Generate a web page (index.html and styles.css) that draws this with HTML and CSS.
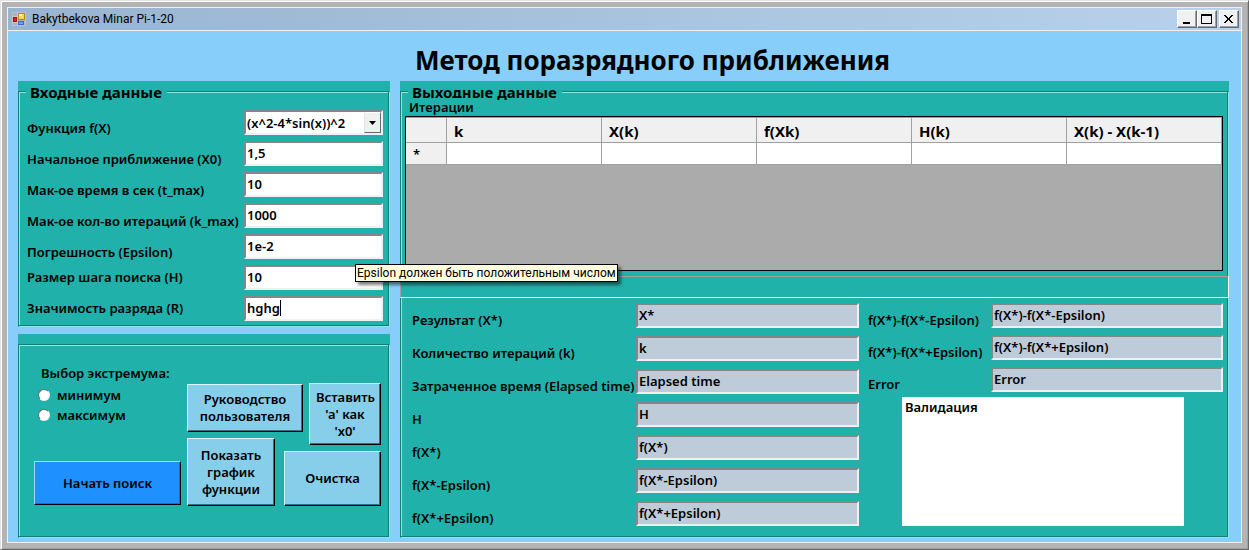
FILE: index.html
```html
<!DOCTYPE html>
<html lang="ru">
<head>
<meta charset="utf-8">
<title>Bakytbekova Minar Pi-1-20</title>
<link rel="stylesheet" href="styles.css">
</head>
<body>
<div class="window">
  <header class="titlebar">
    <svg class="app-icon" width="14" height="14" viewBox="0 0 14 14" aria-hidden="true">
      <rect x="0.5" y="0.5" width="13" height="13" fill="#a9b3bf" stroke="#c0bfbd"/>
      <path d="M5.500 0v14M0 4.500h6M0 10.500h14" stroke="#c9c7c3" fill="none"/>
      <rect x="1.500" y="5.500" width="3" height="4" fill="#d8281c" stroke="#9c1710"/>
      <rect x="6.500" y="1.500" width="6" height="6" fill="#fcd462" stroke="#b98a10"/>
      <rect x="7" y="2" width="3" height="2" fill="#fff0b0"/>
      <rect x="6.500" y="9.500" width="5" height="3" fill="#6f9df2" stroke="#3f67cf"/>
    </svg>
    <span class="caption">Bakytbekova Minar Pi-1-20</span>
    <button class="win-btn" type="button" aria-label="Свернуть"><svg width="12" height="12" viewBox="0 0 12 12"><path d="M2 9h7v2H2z"/></svg></button>
    <button class="win-btn" type="button" aria-label="Развернуть"><svg width="12" height="12" viewBox="0 0 12 12"><path fill-rule="evenodd" d="M0 1h11v10H0zM1 3v7h9V3z"/></svg></button>
    <button class="win-btn win-close" type="button" aria-label="Закрыть"><svg width="12" height="12" viewBox="0 0 12 12"><path d="M1 2h2v1h1v1h1v1h1V4h1V3h1V2h2v1H9v1H8v1H7v2h1v1h1v1h1v1H8V9H7V8H6V7H5v1H4v1H3v1H1V9h1V8h1V7h1V5H3V4H2V3H1z"/></svg></button>
  </header>

  <main class="client">
    <h1 class="heading">Метод поразрядного приближения</h1>
    <div class="columns">
      <div class="side">
        <section class="group">
          <fieldset class="frame inputs">
            <legend class="legend">Входные данные</legend>
            <div class="form">
              <label class="low" for="fn">Функция f(X)</label>
              <div class="combo">
                <select id="fn"><option>(x^2-4*sin(x))^2</option></select>
                <span class="arrow" aria-hidden="true"><svg width="7" height="4" viewBox="0 0 7 4"><path d="M0 0h7L3.500 4z"/></svg></span>
              </div>
              <label class="low" for="x0">Начальное приближение (X0)</label>
              <input class="box" id="x0" type="text" value="1,5">
              <label class="low" for="tmax">Мак-ое время в сек (t_max)</label>
              <input class="box" id="tmax" type="text" value="10">
              <label class="low" for="kmax">Мак-ое кол-во итераций (k_max)</label>
              <input class="box" id="kmax" type="text" value="1000">
              <label class="low" for="eps">Погрешность (Epsilon)</label>
              <input class="box" id="eps" type="text" value="1e-2">
              <label for="step">Размер шага поиска (H)</label>
              <div class="field">
                <input class="box" id="step" type="text" value="10">
                <div class="tooltip" role="tooltip">Epsilon должен быть положительным числом</div>
              </div>
              <label for="rank">Значимость разряда (R)</label>
              <div class="field">
                <input class="box" id="rank" type="text" value="hghg">
                <span class="caret" aria-hidden="true"></span>
              </div>
            </div>
          </fieldset>
        </section>

        <section class="group actions-group">
          <fieldset class="frame actions" aria-label="Действия">
            <div class="choice">
              <div class="radios" role="radiogroup" aria-labelledby="ext">
                <div class="choice-title" id="ext">Выбор экстремума:</div>
                <label class="radio"><input type="radio" name="ext">минимум</label>
                <label class="radio"><input type="radio" name="ext">максимум</label>
              </div>
              <button class="btn start" type="button">Начать поиск</button>
            </div>
            <div class="buttons">
              <button class="btn guide" type="button">Руководство пользователя</button>
              <button class="btn insert" type="button">Вставить 'а' как 'x0'</button>
              <button class="btn chart" type="button">Показать график функции</button>
              <button class="btn clear" type="button">Очистка</button>
            </div>
          </fieldset>
        </section>
      </div>

      <section class="group output">
        <fieldset class="frame">
          <legend class="legend">Выходные данные</legend>
          <div class="iterations">
            <div class="grid-title" id="iter">Итерации</div>
            <div class="datagrid">
              <table aria-labelledby="iter">
                <thead>
                  <tr><th class="rowhead"></th><th>k</th><th>X(k)</th><th>f(Xk)</th><th>H(k)</th><th>X(k) - X(k-1)</th></tr>
                </thead>
                <tbody>
                  <tr><td class="rowhead">*</td><td></td><td></td><td></td><td></td><td></td></tr>
                </tbody>
              </table>
            </div>
          </div>
          <div class="statusbar"></div>
          <div class="results">
            <div class="pairs">
              <label for="r1">Результат (X*)</label><input class="box out" id="r1" type="text" readonly value="X*">
              <label for="r2">Количество итераций (k)</label><input class="box out" id="r2" type="text" readonly value="k">
              <label for="r3">Затраченное время (Elapsed time)</label><input class="box out" id="r3" type="text" readonly value="Elapsed time">
              <label for="r4">H</label><input class="box out" id="r4" type="text" readonly value="H">
              <label for="r5">f(X*)</label><input class="box out" id="r5" type="text" readonly value="f(X*)">
              <label for="r6">f(X*-Epsilon)</label><input class="box out" id="r6" type="text" readonly value="f(X*-Epsilon)">
              <label for="r7">f(X*+Epsilon)</label><input class="box out" id="r7" type="text" readonly value="f(X*+Epsilon)">
            </div>
            <div class="checks">
              <div class="pairs errors">
                <label for="e1">f(X*)-f(X*-Epsilon)</label><input class="box out" id="e1" type="text" readonly value="f(X*)-f(X*-Epsilon)">
                <label for="e2">f(X*)-f(X*+Epsilon)</label><input class="box out" id="e2" type="text" readonly value="f(X*)-f(X*+Epsilon)">
                <label for="e3">Error</label><input class="box out" id="e3" type="text" readonly value="Error">
              </div>
              <textarea class="validation" aria-label="Валидация" readonly>Валидация</textarea>
            </div>
          </div>
        </fieldset>
      </section>
    </div>
  </main>
</div>
</body>
</html>
```
FILE: styles.css
```css
* {
  box-sizing: border-box;
}

body {
  margin: 0;
  font: 600 13px/18px "Noto Sans", "Open Sans", sans-serif;
  color: #000;
}

input, select, textarea, button {
  font: inherit;
  color: inherit;
  margin: 0;
}

.window {
  display: flex;
  flex-direction: column;
  min-height: 100vh;
  padding: 5px;
  background: #b4b4b4;
  border: 1px solid;
  border-color: #e3e3e3 #696969 #696969 #e3e3e3;
  box-shadow: inset 1px 1px #fff, inset -1px -1px #a0a0a0;
}

.titlebar {
  display: flex;
  align-items: center;
  height: 24px;
  margin: 1px 1px 0;
  padding: 0 2px 0 4px;
  border: 1px solid #f0f0f0;
  background: linear-gradient(90deg, #99b4d1, #b9d1ea);
}

.caption {
  flex: 1;
  margin-left: 6px;
  font-family: Roboto, "Noto Sans", sans-serif;
  font-size: 12px;
  font-weight: 400;
}

.win-btn {
  display: flex;
  align-items: center;
  justify-content: center;
  width: 20px;
  height: 18px;
  padding: 0;
  background: #f0f0f0;
  border: 1px solid;
  border-color: #fff #696969 #696969 #fff;
  box-shadow: inset -1px -1px #a0a0a0;
}

.win-close {
  margin-left: 2px;
}

.client {
  flex: 1;
  display: flex;
  flex-direction: column;
  margin: 0 1px 1px;
  padding: 0 12px 4px 10px;
  background: #87cefa;
  border: 1px solid #f0f0f0;
  border-top: 0;
}

.heading {
  margin: 0;
  padding: 11px 0 3px 397px;
  font-size: 26px;
  line-height: 36px;
  font-weight: 700;
}

.columns {
  flex: 1;
  display: grid;
  grid-template-columns: 372fr 829fr;
  column-gap: 10px;
}

.side {
  display: flex;
  flex-direction: column;
  gap: 7px;
}

.group {
  display: flex;
  flex-direction: column;
  background: #20b2aa;
}

.frame {
  flex: 1;
  min-width: 0;
  margin: 0 1px 1px 0;
  padding: 0;
  border: 1px solid #177d78;
  box-shadow: inset 1px 1px #8ee6df, 1px 1px #8ee6df;
}

.legend {
  margin-left: 7px;
  padding: 2px 5px 0 4px;
  background: #20b2aa;
  font-size: 15px;
  line-height: 18px;
  font-weight: 700;
}

.form {
  display: grid;
  grid-template-columns: 1fr 139px;
  row-gap: 6px;
  padding: 9px 5px 4px 8px;
}

.form label {
  line-height: 25px;
  white-space: nowrap;
}

.form .low {
  padding-top: 5px;
  line-height: 20px;
  align-self: end;
  height: 22px;
}

.box {
  display: block;
  width: 100%;
  height: 25px;
  padding: 0 1px 1px;
  background: #fff;
  border: 2px solid;
  border-color: #868686 #f0f0f0 #f0f0f0 #868686;
  outline: 0;
}

.out {
  background: #becbd9;
}

.combo {
  position: relative;
  height: 25px;
  border: 2px solid;
  border-color: #868686 #f0f0f0 #f0f0f0 #868686;
  background: #fff;
}

.combo select {
  display: block;
  width: 100%;
  height: 21px;
  padding: 0 1px;
  border: 0;
  background: none;
  appearance: none;
}

.arrow {
  position: absolute;
  top: 0;
  right: 0;
  display: flex;
  align-items: center;
  justify-content: center;
  width: 17px;
  height: 21px;
  background: #f0f0f0;
  border: 1px solid;
  border-color: #fff #696969 #696969 #e3e3e3;
  pointer-events: none;
}

.field {
  position: relative;
}

.caret {
  position: absolute;
  left: 36px;
  top: 4px;
  width: 1px;
  height: 16px;
  background: #000;
}

.tooltip {
  position: absolute;
  z-index: 2;
  left: 111px;
  top: -1px;
  padding: 0 1px;
  background: #ffffe1;
  border: 1px solid #000;
  box-shadow: 3px 3px 3px rgba(0, 0, 0, 0.5);
  font-family: Roboto, "Noto Sans", sans-serif;
  font-size: 12px;
  line-height: 16px;
  font-weight: 400;
  white-space: nowrap;
}

.actions-group {
  flex: 1;
  padding-top: 10px;
}

.actions {
  display: flex;
  justify-content: space-between;
  padding: 19px 7px 30px 15px;
}

.choice {
  display: flex;
  flex-direction: column;
  justify-content: space-between;
}

.radios {
  padding-left: 4px;
}

.choice-title {
  margin-bottom: 3px;
  padding-left: 3px;
}

.radio {
  display: flex;
  align-items: center;
  height: 20px;
}

.radio input {
  appearance: none;
  width: 12px;
  height: 12px;
  margin-right: 7px;
  border: 1px solid;
  border-color: #696969 #f0f0f0 #f0f0f0 #696969;
  border-radius: 50%;
  background: #fff;
}

.buttons {
  display: grid;
  grid-template-columns: 97px 25px 72px;
  grid-template-rows: 55px 13px 55px;
  align-content: end;
}

.btn {
  padding: 0 6px;
  background: #87ceeb;
  border: 1px solid;
  border-color: #e0f4fb #000 #000 #e0f4fb;
  box-shadow: inset -1px -1px #2f6f8c;
  line-height: 17px;
}

.start {
  width: 147px;
  height: 44px;
  margin-bottom: 1px;
  background: #1e90ff;
  border-color: #a5d2ff #000 #000 #a5d2ff;
}

.guide {
  grid-area: 1 / 1 / 2 / 3;
  width: 116px;
  height: 48px;
  margin-top: 1px;
}

.insert {
  grid-area: 1 / 3 / 3 / 4;
  height: 62px;
}

.chart {
  grid-area: 2 / 1 / 4 / 2;
  width: 88px;
}

.clear {
  grid-area: 3 / 2 / 4 / 4;
}

.iterations {
  padding: 0 4px;
}

.grid-title {
  position: relative;
  width: 76px;
  margin-top: -3px;
  padding-left: 4px;
  background: #20b2aa;
}

.datagrid {
  height: 155px;
  border: 1px solid #000;
  background: #ababab;
}

.datagrid table {
  width: 100%;
  table-layout: fixed;
  border-collapse: separate;
  border-spacing: 0;
}

.datagrid th {
  height: 26px;
  padding: 3px 0 1px 7px;
  background: #f0f0f0;
  border: solid #a0a0a0;
  border-width: 1px 1px 1px 0;
  font-size: 15px;
  font-weight: 700;
  text-align: left;
}

.datagrid td {
  height: 22px;
  padding: 0 0 0 7px;
  background: #fff;
  border: solid #a0a0a0;
  border-width: 0 1px 1px 0;
}

.datagrid .rowhead {
  width: 41px;
  background: #f0f0f0;
}

.statusbar {
  position: relative;
  height: 22px;
  margin: 5px -2px 0 -1px;
  border: 1px solid;
  border-color: #a0a0a0 #fff #fff #a0a0a0;
  background: #20b2aa;
}

.results {
  display: grid;
  grid-template-columns: 447fr 355fr;
  column-gap: 9px;
  padding: 5px 4px 10px 11px;
}

.pairs {
  display: grid;
  grid-template-columns: 1fr 223px;
  row-gap: 8px;
}

.pairs label {
  padding-top: 5px;
  line-height: 25px;
  height: 25px;
  white-space: nowrap;
}

.errors {
  grid-template-columns: 1fr 232px;
  row-gap: 7px;
}

.checks {
  display: flex;
  flex-direction: column;
}

.validation {
  flex: 1;
  margin: 5px 39px 0 34px;
  padding: 1px 3px;
  border: 0;
  outline: 0;
  resize: none;
  background: #fff;
}
```
